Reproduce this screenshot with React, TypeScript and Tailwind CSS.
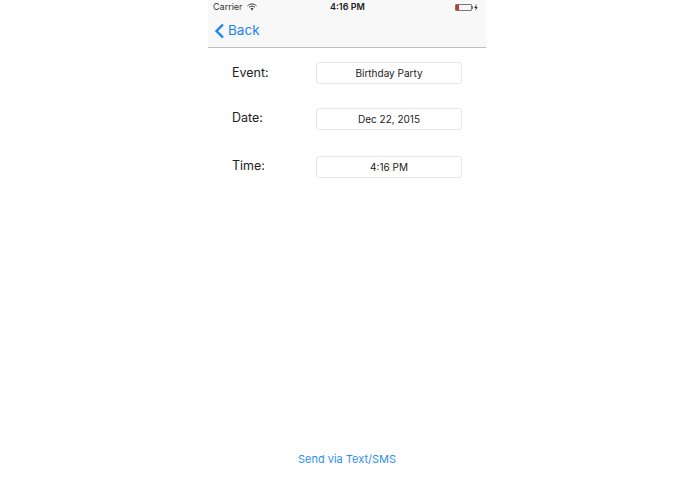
import React from "react";

const rows = [
  { label: "Event:", value: "Birthday Party", mt: "mt-[14px]", labelShift: "" },
  { label: "Date:", value: "Dec 22, 2015", mt: "mt-6", labelShift: "-translate-y-[1px]" },
  { label: "Time:", value: "4:16 PM", mt: "mt-[26px]", labelShift: "-translate-y-[1px]" },
];

export default function App() {
  return (
    <div className="flex h-[494px] w-[695px] justify-center bg-white font-['Inter','Liberation_Sans',sans-serif] pl-[-1px]">
      <div className="mr-[1px] flex h-full w-[278px] flex-col">
        <header className="h-[48px] border-b border-[#bdbdbd] bg-[#f8f8f8]">
          <div className="relative flex h-[14px] items-center px-[5px] text-[9px] leading-[14px] text-[#333]">
            <span>Carrier</span>
            <svg className="ml-[4px]" width="10" height="8" viewBox="0 0 10 8" fill="none">
              <path d="M0.5 2.8C3 0.4 7 0.4 9.5 2.8" stroke="#333" strokeWidth="1" />
              <path d="M2 4.3C3.7 2.8 6.3 2.8 8 4.3" stroke="#333" strokeWidth="1" />
              <path d="M3.4 5.6C4.4 4.9 5.6 4.9 6.6 5.6L5 7.4Z" fill="#333" />
            </svg>
            <span className="absolute left-[122px] font-semibold text-[#222]">4:16 PM</span>
            <div className="ml-auto mr-[3px] flex items-center">
              <div className="h-[7px] w-[17px] overflow-hidden rounded-[1px] border border-[#777]">
                <div className="h-full w-[3px] bg-[#d0342c]" />
              </div>
              <div className="h-[3px] w-[1px] bg-[#777]" />
              <svg className="ml-[1px]" width="4" height="7" viewBox="0 0 4 7">
                <path d="M2.6 0L0.2 3.9H1.8L1.2 7L3.8 2.9H2.2Z" fill="#333" />
              </svg>
            </div>
          </div>
          <div className="flex h-[33px] items-center pl-[6px] text-[#1b84f2]">
            <svg width="11" height="16" viewBox="0 0 11 16" fill="none">
              <path d="M9 1.5L2.5 8L9 14.5" stroke="#1b84f2" strokeWidth="2.4" />
            </svg>
            <span className="ml-[3px] text-[13.5px]">Back</span>
          </div>
        </header>
        <main className="flex flex-1 flex-col">
          {rows.map((r) => (
            <div key={r.label} className={`${r.mt} flex h-[22px] items-center pl-[24px]`}>
              <span className={`w-[84px] text-[12.5px] text-[#222] ${r.labelShift}`}>{r.label}</span>
              <div className="flex h-[22px] w-[146px] items-center justify-center rounded-[3px] border border-[#e8e8e8] text-[10px] text-[#222]">
                {r.value}
              </div>
            </div>
          ))}
          <div className="mt-auto mb-[28px] text-center text-[11px] leading-[14px] text-[#2f8ff0]">
            Send via Text/SMS
          </div>
        </main>
      </div>
    </div>
  );
}
